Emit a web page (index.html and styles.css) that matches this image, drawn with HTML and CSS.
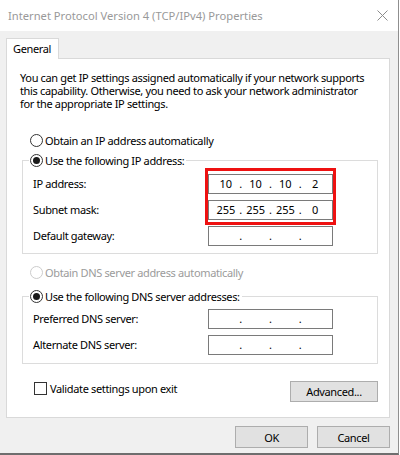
FILE: index.html
```html
<!DOCTYPE html>
<html>
<head>
<meta charset="utf-8">
<link rel="stylesheet" href="styles.css">
</head>
<body>
<div class="window">
  <div class="titlebar">
    <span class="title">Internet Protocol Version 4 (TCP/IPv4) Properties</span>
    <svg class="close" width="11" height="11" viewBox="0 0 11 11"><path d="M0.5 0.5 L10.5 10.5 M10.5 0.5 L0.5 10.5" stroke="#8c8c8c" stroke-width="1" fill="none"/></svg>
  </div>
  <div class="client">
    <div class="tabs"><div class="tab">General</div></div>
    <div class="panel">
      <p class="intro">You can get IP settings assigned automatically if your network supports this capability. Otherwise, you need to ask your network administrator for the appropriate IP settings.</p>
      <div class="radio-row first"><span class="radio"></span><span>Obtain an IP address automatically</span></div>
      <fieldset class="group group-ip">
        <legend><span class="radio checked"></span><span>Use the following IP address:</span></legend>
        <div class="fields">
          <span class="label r1">IP address:</span>
          <div class="ipbox r1"><span>10</span><i>.</i><span>10</span><i>.</i><span>10</span><i>.</i><span>2</span></div>
          <span class="label r2">Subnet mask:</span>
          <div class="ipbox r2"><span>255</span><i>.</i><span>255</span><i>.</i><span>255</span><i>.</i><span>0</span></div>
          <span class="label r3">Default gateway:</span>
          <div class="ipbox r3"><span></span><i>.</i><span></span><i>.</i><span></span><i>.</i><span></span></div>
          <div class="highlight"></div>
        </div>
      </fieldset>
      <div class="radio-row disabled"><span class="radio"></span><span>Obtain DNS server address automatically</span></div>
      <fieldset class="group group-dns">
        <legend><span class="radio checked"></span><span>Use the following DNS server addresses:</span></legend>
        <div class="fields">
          <span class="label r1">Preferred DNS server:</span>
          <div class="ipbox r1"><span></span><i>.</i><span></span><i>.</i><span></span><i>.</i><span></span></div>
          <span class="label r2">Alternate DNS server:</span>
          <div class="ipbox r2"><span></span><i>.</i><span></span><i>.</i><span></span><i>.</i><span></span></div>
        </div>
      </fieldset>
      <div class="bottom-row">
        <label class="check-row"><span class="checkbox"></span><span>Validate settings upon exit</span></label>
        <button class="btn advanced">Advanced...</button>
      </div>
    </div>
    <div class="actions">
      <button class="btn ok">OK</button>
      <button class="btn">Cancel</button>
    </div>
  </div>
</div>
</body>
</html>
```
FILE: styles.css
```css
* { box-sizing: border-box; }
html, body { margin: 0; padding: 0; background: #ffffff; }
body {
  font-family: "Noto Sans", Roboto, sans-serif;
  font-size: 11px;
  letter-spacing: -0.35px;
  color: #000;
}
.window {
  width: 399px;
  height: 455px;
  background: #f0f0f0;
  border-right: 1px solid #8f8f8f;
  border-bottom: 2px solid #6e6e6e;
  display: flex;
  flex-direction: column;
}
.titlebar {
  height: 31px;
  background: #fff;
  display: flex;
  align-items: center;
  justify-content: space-between;
  padding: 0 10px 0 8px;
  flex: none;
}
.title { color: #999; line-height: 16px; font-size: 11.2px; letter-spacing: 0; }
.close { display: block; }
.client {
  padding: 7px 8px 0 6px;
}
.tabs { display: flex; position: relative; z-index: 1; }
.tab {
  width: 53px;
  height: 21px;
  margin-bottom: -1px;
  padding: 1px 0 0 6px;
  background: #fff;
  border: 1px solid #d9d9d9;
  border-bottom: none;
  line-height: 18px;
}
.panel {
  height: 360px;
  background: #fff;
  border: 1px solid #d9d9d9;
  display: flex;
  flex-direction: column;
}
.intro {
  margin: 12px 22px 0 13px;
  line-height: 13px;
}
.radio-row {
  display: flex;
  align-items: center;
  height: 16px;
  padding-left: 23px;
  gap: 2px;
}
.radio-row.first { margin-top: 22px; }
.radio {
  width: 13px;
  height: 13px;
  border: 1px solid #333;
  border-radius: 50%;
  background: #fff;
  display: inline-flex;
  align-items: center;
  justify-content: center;
  flex: none;
}
.radio.checked::after {
  content: "";
  width: 7px;
  height: 7px;
  border-radius: 50%;
  background: #1a1a1a;
}
.disabled { color: #9b9b9b; margin-top: 10px; }
.disabled .radio { border-color: #cccccc; }
.group {
  margin: 4px 11px 0 15px;
  padding: 6px 0 7px 10px;
  border: 1px solid #dcdcdc;
  min-inline-size: 0;
}
.group-dns { margin-top: 8px; padding-top: 5px; padding-bottom: 8px; }
.group legend {
  display: flex;
  align-items: center;
  gap: 2px;
  height: 16px;
  padding: 0 2px 0 1px;
  margin-left: -4px;
}
.fields {
  display: grid;
  grid-template-columns: 175px 125px;
  grid-auto-rows: 20px;
  row-gap: 6px;
  align-items: center;
}
.label { grid-column: 1; line-height: 16px; }
.r1 { grid-row: 1; }
.r2 { grid-row: 2; }
.r3 { grid-row: 3; }
.ipbox {
  grid-column: 2;
  height: 20px;
  border: 1px solid #7a7a7a;
  background: #fff;
  display: grid;
  grid-template-columns: 1fr 4px 1fr 4px 1fr 4px 1fr;
  padding: 0 4px;
  align-items: center;
  text-align: center;
  line-height: 18px;
  letter-spacing: 0;
}
.ipbox i { font-style: normal; }
.highlight {
  grid-column: 2;
  grid-row: 1 / span 2;
  align-self: stretch;
  margin: -6px -3px -5px -3px;
  border: 3px solid #ee1111;
  pointer-events: none;
}
.bottom-row {
  margin: 17px 11px 0 27px;
  display: flex;
  justify-content: space-between;
  align-items: flex-start;
}
.check-row { display: flex; align-items: center; gap: 3px; height: 14px; }
.checkbox {
  width: 13px;
  height: 13px;
  border: 1px solid #333;
  background: #fff;
  flex: none;
}
.btn {
  font-family: inherit;
  font-size: 11px;
  letter-spacing: -0.35px;
  color: #000;
  background: #e1e1e1;
  border: 1px solid #adadad;
  padding: 0;
  margin: 0;
}
.advanced { width: 88px; height: 21px; }
.actions {
  margin-top: 8px;
  display: flex;
  justify-content: flex-end;
  gap: 9px;
}
.actions .btn { width: 73px; height: 22px; }
```
